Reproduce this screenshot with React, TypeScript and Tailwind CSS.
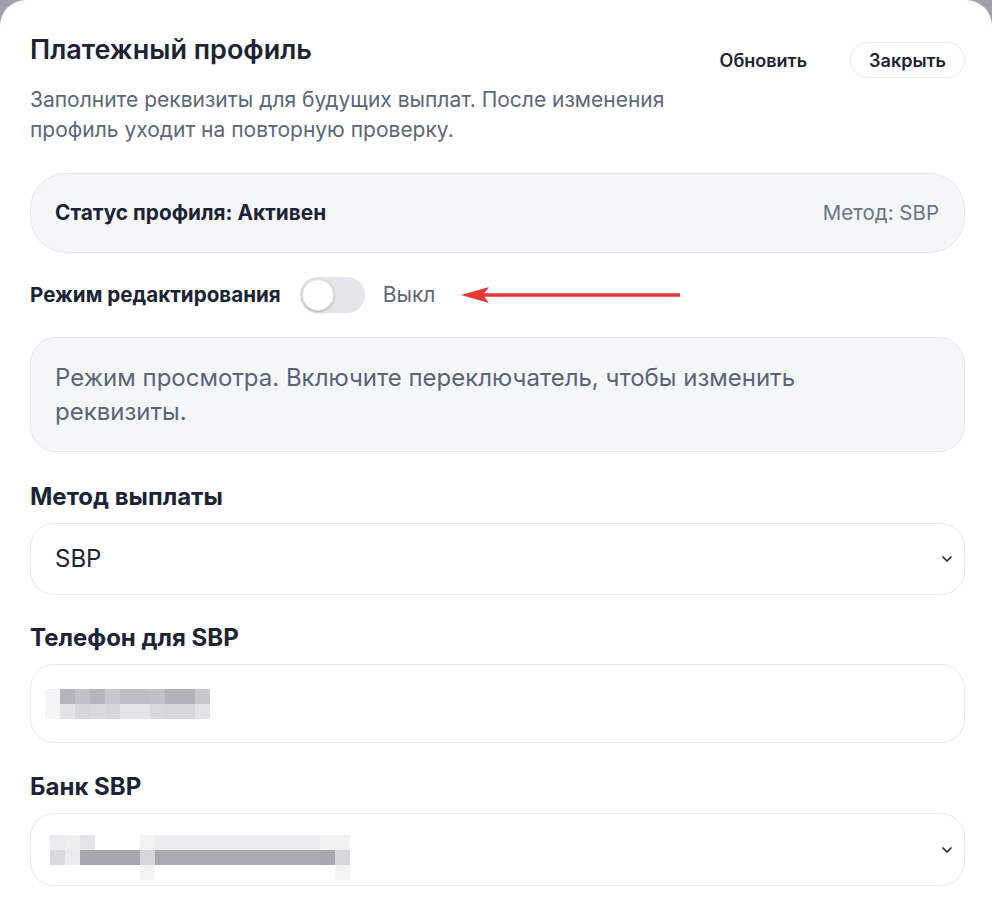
import { ChevronDown } from "lucide-react";

type Col = { w: number; cells: string[] };

const PHONE_MASK: Col[] = [
  { w: 15, cells: ["#f3f4f6", "#f5f5f6"] },
  { w: 15, cells: ["#b2b5bf", "#e2e3e7"] },
  { w: 15, cells: ["#c0c2c9", "#d5d6db"] },
  { w: 15, cells: ["#b4b6be", "#d8dade"] },
  { w: 15, cells: ["#c6c8cf", "#d5d6da"] },
  { w: 30, cells: ["#bdbfc6", "#e4e5e8"] },
  { w: 15, cells: ["#bfc1c8", "#d8d9dc"] },
  { w: 30, cells: ["#b0b2ba", "#d6d7db"] },
  { w: 15, cells: ["#c7c8ce", "#e2e3e6"] },
];

const BANK_MASK: Col[] = [
  { w: 15, cells: ["#ebebed", "#d9dadd", "transparent"] },
  { w: 15, cells: ["#eeeeef", "#ececee", "transparent"] },
  { w: 15, cells: ["#e3e4e7", "#a6a8b0", "transparent"] },
  { w: 45, cells: ["transparent", "#a6a8b0", "transparent"] },
  { w: 15, cells: ["#f2f2f3", "#d6d7db", "#f3f3f4"] },
  { w: 165, cells: ["#ebecee", "#a8aab2", "transparent"] },
  { w: 15, cells: ["#f1f1f2", "#a6a8b0", "transparent"] },
  { w: 15, cells: ["#f1f1f2", "#d6d7db", "#f3f3f4"] },
];

function Mosaic({ cols }: { cols: Col[] }) {
  return (
    <div className="flex">
      {cols.map((c, i) => (
        <div key={i} className="flex flex-col" style={{ width: c.w }}>
          {c.cells.map((color, j) => (
            <div key={j} className="h-[15px]" style={{ background: color }} />
          ))}
        </div>
      ))}
    </div>
  );
}

function Label({ children }: { children: React.ReactNode }) {
  return (
    <div className="mb-[12px] text-[24px] font-bold leading-[28px] text-[#1c2334]">
      {children}
    </div>
  );
}

export default function App() {
  return (
    <div className="min-h-[919px] bg-[#9fa2ac] font-['Inter',sans-serif]">
      <div className="min-h-[919px] rounded-t-[26px] bg-white pl-[30px] pr-[27px]">
        <div className="flex items-start justify-between">
          <div>
            <h2 className="pt-[34px] text-[27px] font-semibold leading-[32px] text-[#1c2334]">
              Платежный профиль
            </h2>
            <p className="mt-[19px] text-[21px] leading-[30px] text-[#5c6679]">
              Заполните реквизиты для будущих выплат. После изменения
              <br />
              профиль уходит на повторную проверку.
            </p>
          </div>
          <div className="mt-[42px] flex items-center gap-[43px]">
            <button className="h-[36px] text-[18px] font-semibold text-[#1c2334]">
              Обновить
            </button>
            <button className="h-[36px] rounded-full border border-[#e5e7eb] bg-white px-[18px] text-[18px] font-semibold text-[#1c2334]">
              Закрыть
            </button>
          </div>
        </div>

        <div className="mt-[28px] flex h-[80px] items-center justify-between rounded-[36px] border border-[#e5e7eb] bg-[#f5f6f8] pl-[24px] pr-[25px]">
          <span className="text-[20.8px] font-bold text-[#1c2334]">
            Статус профиля: Активен
          </span>
          <span className="text-[20.5px] text-[#6b7587]">Метод: SBP</span>
        </div>

        <div className="mt-[24px] flex h-[36px] items-center">
          <span className="text-[20.6px] font-bold text-[#1c2334]">
            Режим редактирования
          </span>
          <div className="ml-[19px] flex h-[36px] w-[65px] items-center rounded-full bg-[#e4e6ea] pl-[2px]">
            <div className="h-[32px] w-[32px] rounded-full border border-[#e2e4e8] bg-white shadow-[0_1px_3px_rgba(0,0,0,0.25)]" />
          </div>
          <span className="ml-[18px] text-[21px] text-[#5c6679]">Выкл</span>
          <svg
            className="ml-[26px]"
            width="220"
            height="20"
            viewBox="0 0 220 20"
          >
            <line x1="20" y1="10" x2="219" y2="10" stroke="#e53935" strokeWidth="3.5" />
            <path d="M0 10 L28 2 L22 10 L28 18 Z" fill="#e53935" />
          </svg>
        </div>

        <div className="mt-[24px] flex h-[115px] items-center rounded-[26px] border border-[#e5e7eb] bg-[#f5f6f8] px-[24px]">
          <p className="text-[24px] leading-[34px] text-[#5a6479]">
            Режим просмотра. Включите переключатель, чтобы изменить
            <br />
            реквизиты.
          </p>
        </div>

        <div className="mt-[31px]">
          <Label>Метод выплаты</Label>
          <div className="flex h-[72px] items-center justify-between rounded-[24px] border border-[#e5e7eb] bg-white pl-[24px] pr-[9px]">
            <span className="text-[24px] text-[#1c2334]">SBP</span>
            <ChevronDown size={16} strokeWidth={2.5} className="text-[#1c2334]" />
          </div>
        </div>

        <div className="mt-[29px]">
          <Label>Телефон для SBP</Label>
          <div className="flex h-[79px] items-center rounded-[24px] border border-[#e5e7eb] bg-white pl-[14px]">
            <Mosaic cols={PHONE_MASK} />
          </div>
        </div>

        <div className="mt-[30px]">
          <Label>Банк SBP</Label>
          <div className="flex h-[73px] items-center justify-between rounded-[24px] border border-[#e5e7eb] bg-white pl-[19px] pr-[9px]">
            <div className="pt-[15px]">
              <Mosaic cols={BANK_MASK} />
            </div>
            <ChevronDown size={16} strokeWidth={2.5} className="text-[#1c2334]" />
          </div>
        </div>
      </div>
    </div>
  );
}
